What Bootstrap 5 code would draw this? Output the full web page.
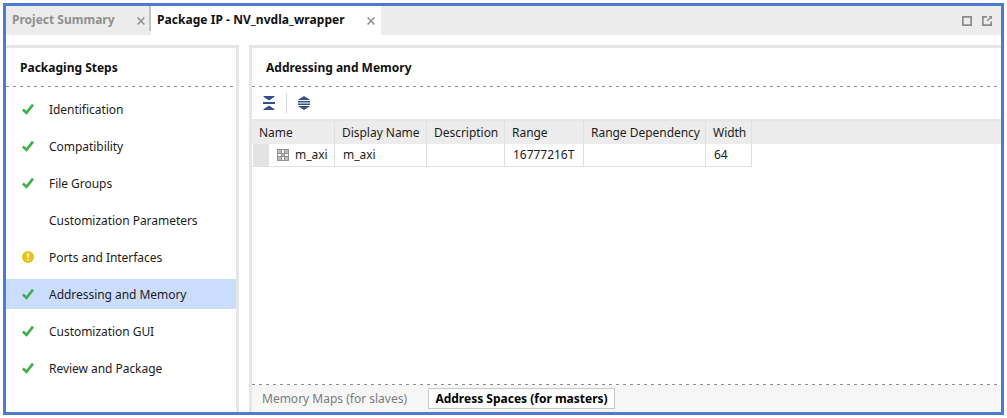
<!DOCTYPE html>
<html lang="en">
<head>
<meta charset="utf-8">
<title>Package IP - NV_nvdla_wrapper</title>
<link href="https://cdn.jsdelivr.net/npm/bootstrap@5.3.0/dist/css/bootstrap.min.css" rel="stylesheet">
<style>
html,body{height:100%;overflow:hidden}
body{font:12px/18px "Noto Sans",sans-serif;color:#1c1c1c;background:#fff;padding:3px}
svg{display:block;flex:none}
.frame{width:1001px;height:412px;border:3px solid #4a7ccf}
.tabbar{height:29px;background:#ececec}
.doc-tab{height:29px;padding:0 5px 1px 6px}
.doc-tab.off{width:143px;color:#8f8f8f}
.doc-tab.on{width:230px;background:#fff;color:#111;letter-spacing:.05px}
.sep{width:2px;height:25px;background:#c2c2c2}
.doc-tab svg{margin-top:2px;margin-right:1px}
.doc-tab.off svg{margin-right:-1px}
.panes{margin-top:10px;gap:10px;min-height:0}
.steps{width:233px;border:solid #e6e6e6;border-width:3px 3px 0 0}
.main-pane{border:solid #e6e6e6;border-width:3px 0 0 3px;min-width:0}
.pane-title{height:38px;padding:1px 14px 0;color:#111}
.dashes{height:1px;flex:none;background:repeating-linear-gradient(90deg,#8e8e8e 0 3px,transparent 3px 7px)}
.step-list{padding-top:7px;gap:7px}
.step{height:30px;padding-left:16px;letter-spacing:-.04px}
.step span{padding-top:2px}
.step.active{background:#cbddff}
.step .ico{width:27px}
.tools{height:32px;padding-left:10px}
.tools .rule{width:1px;height:20px;background:#d9d9d9;margin:0 11px}
.grid-wrap{background:linear-gradient(#e6e6e6 0 2px,#ececec 2px 25px,#fff 25px);padding-top:2px}
.grid-tbl{table-layout:fixed;width:500px;border-collapse:separate;border-spacing:0}
.grid-tbl th,.grid-tbl td{padding:0 0 0 7px;font-weight:400;border-right:1px solid #e0e0e0;white-space:nowrap;line-height:20px;letter-spacing:-.03px}
.grid-tbl th{height:23px;padding-top:1px}
.grid-tbl td{height:23px;padding:0 0 0 8px;border-bottom:1px solid #e0e0e0}
.grid-tbl td.name{padding:0 0 0 1px}
.name .indent{width:16px;height:22px;background:#e3e3e3;margin-right:8px}
.name span{margin-left:6px}
.views{height:27px;background:#f7f7f7;padding-left:10px;color:#7b7b7b}
.views>span{width:146px}
.view-on{width:187px;height:21px;border:1px solid #c8c8c8;background:#fff;color:#000;margin-left:20px;line-height:19px}
</style>
</head>
<body>
<svg width="0" height="0" class="position-absolute">
  <symbol id="check" viewBox="0 0 12 12"><path d="M.8 6.5 4.5 9.8 11 1.7" fill="none" stroke="#3eb049" stroke-width="2.7"/></symbol>
  <symbol id="close" viewBox="0 0 8 8"><path d="M.6.6 7.4 7.4M7.4.6.6 7.4" stroke="#8a8a8a" stroke-width="1.4"/></symbol>
</svg>
<div class="frame d-flex flex-column">
  <div class="tabbar d-flex">
    <div class="doc-tab off d-flex align-items-center justify-content-between fw-bold"><span>Project Summary</span><svg width="8" height="8"><use href="#close"/></svg></div>
    <div class="sep"></div>
    <div class="doc-tab on d-flex align-items-center justify-content-between fw-bold"><span>Package IP - NV_nvdla_wrapper</span><svg width="8" height="8"><use href="#close"/></svg></div>
    <svg class="ms-auto" width="40" height="29" viewBox="0 0 40 29" fill="none" stroke="#8b8b8b" stroke-width="1.7"><path d="M1.85 10.85h8.3v8.3h-8.3z"/><path d="M26 10.85h-4.15v8.3h8.3V15.5"/><path d="M26 15 30 11" stroke-width="1.4"/><path fill="#8b8b8b" stroke="none" d="M27.6 10H31v3.4z"/></svg>
  </div>
  <div class="panes d-flex flex-grow-1">
    <div class="steps d-flex flex-column">
      <div class="pane-title d-flex align-items-center fw-bold">Packaging Steps</div>
      <div class="dashes"></div>
      <div class="step-list d-flex flex-column">
        <div class="step d-flex align-items-center"><div class="ico"><svg width="12" height="12"><use href="#check"/></svg></div><span>Identification</span></div>
        <div class="step d-flex align-items-center"><div class="ico"><svg width="12" height="12"><use href="#check"/></svg></div><span>Compatibility</span></div>
        <div class="step d-flex align-items-center"><div class="ico"><svg width="12" height="12"><use href="#check"/></svg></div><span>File Groups</span></div>
        <div class="step d-flex align-items-center"><div class="ico"></div><span>Customization Parameters</span></div>
        <div class="step d-flex align-items-center"><div class="ico"><svg width="12" height="12"><circle cx="6" cy="6" r="6" fill="#e8c319"/><path d="M6 2.3v4.4M6 8v1.6" stroke="#fff" stroke-width="1.6"/></svg></div><span>Ports and Interfaces</span></div>
        <div class="step active d-flex align-items-center"><div class="ico"><svg width="12" height="12"><use href="#check"/></svg></div><span>Addressing and Memory</span></div>
        <div class="step d-flex align-items-center"><div class="ico"><svg width="12" height="12"><use href="#check"/></svg></div><span>Customization GUI</span></div>
        <div class="step d-flex align-items-center"><div class="ico"><svg width="12" height="12"><use href="#check"/></svg></div><span>Review and Package</span></div>
      </div>
    </div>
    <div class="main-pane d-flex flex-column flex-grow-1">
      <div class="pane-title d-flex align-items-center fw-bold">Addressing and Memory</div>
      <div class="dashes"></div>
      <div class="tools d-flex align-items-center">
        <svg width="13" height="14" viewBox="0 0 13 14" fill="#34508c"><path d="M1.5 0h11v.8L7 4.6 1.5.8zM1 6h12v2H1zM1.5 14h11v-.8L7 9.4l-5.5 3.8z"/></svg>
        <div class="rule"></div>
        <svg width="13" height="14" viewBox="0 0 13 14" fill="#34508c"><path d="M6 0 11.5 3.6V4H.5v-.4zM0 5h12v1.5H0zM0 7.5h12V9H0zM6 14l5.5-3.6V10H.5v.4z"/></svg>
      </div>
      <div class="grid-wrap">
        <table class="grid-tbl">
          <colgroup><col style="width:83px"><col style="width:92px"><col style="width:78px"><col style="width:79px"><col style="width:122px"><col style="width:46px"></colgroup>
          <thead><tr><th>Name</th><th>Display Name</th><th>Description</th><th>Range</th><th>Range Dependency</th><th>Width</th></tr></thead>
          <tbody><tr>
            <td class="name"><div class="d-flex align-items-center"><div class="indent"></div><svg width="12" height="12" viewBox="0 0 12 12"><path fill="#929292" d="M0 0h12v12H0z"/><path fill="#bdbdbd" d="M1 1h3v3H1zM8 1h3v3H8zM5 5h2v2H5zM1 8h3v3H1zM8 8h3v3H8z"/><path fill="#fff" d="M5 1h2v3H5zM1 5h3v2H1zM8 5h3v2H8zM5 8h2v3H5z"/></svg><span>m_axi</span></div></td>
            <td>m_axi</td><td></td><td>16777216T</td><td></td><td>64</td>
          </tr></tbody>
        </table>
      </div>
      <div class="dashes mt-auto"></div>
      <div class="views d-flex align-items-center"><span>Memory Maps (for slaves)</span><div class="view-on fw-bold text-center">Address Spaces (for masters)</div></div>
    </div>
  </div>
</div>
<script src="https://cdn.jsdelivr.net/npm/bootstrap@5.3.0/dist/js/bootstrap.bundle.min.js"></script>
</body>
</html>
